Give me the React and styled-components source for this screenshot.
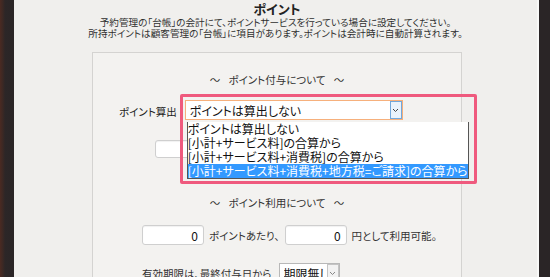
import React from 'react';
import styled, { createGlobalStyle } from 'styled-components';

const GlobalStyle = createGlobalStyle`
    html, body {
        margin: 0;
        padding: 0;
        background: #2b2627;
    }
    body {
        font-family: "Noto Sans CJK JP", "Noto Sans", sans-serif;
        color: #333;
    }
`

const Frame = styled.div`
    display: flex;
    width: 550px;
    height: 277px;
    overflow: hidden;
`

const LeftEdge = styled.div`
    width: 14px;
    flex-shrink: 0;
    background: linear-gradient(to right, #4b2a22 0, #3a2824 3px, #2c2627 5px, #2a2526 100%);
`

const RightEdge = styled.div`
    width: 11px;
    flex-shrink: 0;
    border-left: 2px solid #f8f8f7;
    background: #2a2526;
`

const Paper = styled.div`
    flex: 1;
    display: flex;
    flex-direction: column;
    align-items: center;
    background: #f0efed;
    font-feature-settings: "palt";
    padding-top: 1px;
`

const Title = styled.h1`
    margin: 0;
    font-size: 13px;
    line-height: 15px;
    font-weight: bold;
    color: #222;
    margin-left: 3px;
`

const Desc = styled.p`
    margin: 1px 0 0;
    font-size: 9.6px;
    line-height: 11px;
    text-align: center;
    color: #2f2f2f;
`

const Box = styled.div`
    align-self: flex-start;
    margin: 13px 0 0 78px;
    width: 368px;
    flex: 1;
    border: 1px solid #d4d3d1;
    border-bottom: none;
    background: #f3f2f0;
    padding-top: 20px;
    display: flex;
    flex-direction: column;
`

const Heading = styled.div`
    font-size: 10.5px;
    line-height: 14px;
    text-align: center;
    margin-top: ${props => props.top || 0}px;
    word-spacing: 6px;
`

const Row = styled.div`
    display: flex;
    align-items: center;
    margin-top: ${props => props.top || 0}px;
    padding-left: ${props => props.indent || 0}px;
    font-size: 10.5px;
    gap: ${props => props.gap || 0}px;
`

const Label = styled.span`
    font-size: 10.5px;
    color: #222;
    margin-top: 3px;
`

const SelectWrap = styled.div`
    position: relative;
    margin-left: 8px;
`

const SelectBox = styled.div`
    display: flex;
    align-items: center;
    width: ${props => props.w}px;
    height: ${props => props.h}px;
    box-sizing: border-box;
    background: #fff;
    border: 1px solid ${props => props.focus ? '#f6b07c' : '#b8b8b8'};
    font-size: 12px;
    color: #111;
    padding-left: 4px;
`

const SelectText = styled.span`
    flex: 1;
    white-space: nowrap;
    overflow: hidden;
`

const Arrow = styled.div`
    width: 12px;
    height: 100%;
    box-sizing: border-box;
    display: flex;
    align-items: center;
    justify-content: center;
    border: 1px solid ${props => props.focus ? '#72a8dc' : '#c4c4c4'};
    background: ${props => props.focus ? '#eaf3fc' : '#f2f2f2'};
`

const DropList = styled.ul`
    position: absolute;
    left: 2px;
    top: 22px;
    width: 282px;
    margin: 0;
    padding: 0;
    list-style: none;
    background: #fff;
    border: 1px solid #555;
    border-top: none;
    box-sizing: border-box;
    z-index: 2;
`

const Option = styled.li`
    height: 14px;
    line-height: 14px;
    font-size: 12px;
    white-space: nowrap;
    color: ${props => props.active ? '#fff' : '#111'};
    background: ${props => props.active ? '#3399ff' : 'transparent'};
`

const Highlight = styled.div`
    position: absolute;
    left: -5px;
    top: -6px;
    width: 297px;
    height: 90px;
    box-sizing: border-box;
    border: 3px solid #ef5a7e;
    border-radius: 2px;
    z-index: 3;
    pointer-events: none;
`

const NumInput = styled.input`
    width: ${props => props.w || 62}px;
    height: ${props => props.h || 20}px;
    box-sizing: border-box;
    border: 1px solid #cfcfcf;
    border-radius: 3px;
    background: #fff;
    text-align: right;
    padding: 0 5px;
    font-family: "Noto Sans CJK JP", sans-serif;
    font-size: 12px;
    color: #111;
    box-shadow: inset 0 1px 1px rgba(0,0,0,0.06);
`

const Chevron = ({ color }) => (
    <svg width="7" height="5" viewBox="0 0 7 5">
        <path d="M1 1 L3.5 3.5 L6 1" fill="none" stroke={color} strokeWidth="1"/>
    </svg>
)

const options = [
    'ポイントは算出しない',
    '[小計+サービス料]の合算から',
    '[小計+サービス料+消費税]の合算から',
    '[小計+サービス料+消費税+地方税=ご請求]の合算から'
]

const App = () => {
    return (
        <>
            <GlobalStyle />
            <Frame>
                <LeftEdge />
                <Paper>
                    <Title>ポイント</Title>
                    <Desc>
                        予約管理の「台帳」の会計にて、ポイントサービスを行っている場合に設定してください。<br/>
                        所持ポイントは顧客管理の「台帳」に項目があります。ポイントは会計時に自動計算されます。
                    </Desc>
                    <Box>
                        <Heading>～ ポイント付与について ～</Heading>
                        <Row top={13} indent={26}>
                            <Label>ポイント算出</Label>
                            <SelectWrap>
                                <SelectBox w={218} h={20} focus>
                                    <SelectText>ポイントは算出しない</SelectText>
                                    <Arrow focus><Chevron color="#444"/></Arrow>
                                </SelectBox>
                                <DropList>
                                    {options.map((o, i) => (
                                        <Option key={o} active={i === options.length - 1}>{o}</Option>
                                    ))}
                                </DropList>
                                <Highlight />
                            </SelectWrap>
                        </Row>
                        <Row top={20} indent={62}>
                            <NumInput w={60} h={18} defaultValue=""/>
                        </Row>
                        <Heading top={38}>～ ポイント利用について ～</Heading>
                        <Row top={15} indent={49} gap={5}>
                            <NumInput defaultValue="0"/>
                            <span>ポイントあたり、</span>
                            <NumInput defaultValue="0"/>
                            <span>円として利用可能。</span>
                        </Row>
                        <Row top={18} indent={49} gap={7}>
                            <span>有効期限は、最終付与日から</span>
                            <SelectBox w={61} h={20}>
                                <SelectText>期限無し</SelectText>
                                <Arrow><Chevron color="#888"/></Arrow>
                            </SelectBox>
                        </Row>
                    </Box>
                </Paper>
                <RightEdge />
            </Frame>
        </>
    )
}

export default App;
